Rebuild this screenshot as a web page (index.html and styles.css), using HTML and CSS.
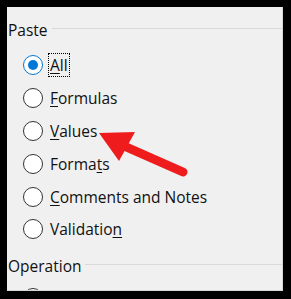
FILE: index.html
```html
<!DOCTYPE html>
<html lang="en">

<head>
  <meta charset="UTF-8">
  <meta name="viewport" content="width=device-width, initial-scale=1.0">
  <title>Paste Special</title>
  <link rel="stylesheet" href="styles.css">
</head>

<body>
  <div class="panel">
    <div class="group-title"><span>Paste</span><i class="rule"></i></div>
    <ul class="options">
      <li><span class="radio checked"></span><span class="label focus"><u>A</u>ll</span></li>
      <li><span class="radio"></span><span class="label"><u>F</u>ormulas</span></li>
      <li><span class="radio"></span><span class="label"><u>V</u>alues</span></li>
      <li><span class="radio"></span><span class="label">Forma<u>t</u>s</span></li>
      <li><span class="radio"></span><span class="label"><u>C</u>omments and Notes</span></li>
      <li><span class="radio"></span><span class="label">Validatio<u>n</u></span></li>
    </ul>
    <div class="group-title second"><span>Operation</span><i class="rule"></i></div>
    <ul class="options cut">
      <li><span class="radio"></span></li>
    </ul>
  </div>
  <!-- red pointer drawn on top of the dialog -->
  <svg class="arrow" width="291" height="299" viewBox="0 0 291 299">
    <line x1="124" y1="146" x2="183" y2="172" stroke="#ee1c1c" stroke-width="9" stroke-linecap="round" />
    <polygon points="99,133 135,132 119,161" fill="#ee1c1c" />
  </svg>
</body>

</html>
```

FILE: styles.css
```css
body {
  margin: 0;
  padding: 0;
  background: #000;
  width: 291px;
  height: 299px;
  position: relative;
  overflow: hidden;
  font-family: "Open Sans", "Liberation Sans", sans-serif;
  font-size: 15.5px;
  color: #111;
}

.panel {
  margin: 7px 0 0 7px;
  width: 276px;
  height: 284px;
  background: #f0f0f0;
  border-right: 1px solid #d6d6d6;
  border-bottom: 1px solid #d6d6d6;
  padding: 13px 0 0 1px;
  box-sizing: border-box;
  overflow: hidden;
}

.group-title {
  display: flex;
  align-items: center;
  height: 20px;
  line-height: 20px;
  gap: 4px;
}

.group-title.second {
  margin-top: 10px;
}

.rule {
  flex: 1;
  height: 1px;
  background: #d9d9d9;
  margin-top: -3px;
}

.options {
  list-style: none;
  margin: 9px 0 0 0;
  padding: 0 0 0 15px;
}

.options.cut {
  margin-top: 6px;
}

.options li {
  display: flex;
  align-items: center;
  height: 32.8px;
}

.radio {
  width: 20px;
  height: 20px;
  box-sizing: border-box;
  border: 1px solid #333;
  border-radius: 50%;
  background: #fff;
  display: flex;
  align-items: center;
  justify-content: center;
}

.radio.checked {
  border-color: #0078d7;
}

.radio.checked::after {
  content: "";
  width: 10px;
  height: 10px;
  border-radius: 50%;
  background: #0078d7;
}

.label {
  margin-left: 5px;
  padding: 0 1px;
  line-height: 22px;
  border: 1px dotted transparent;
}

.label.focus {
  border-color: #000;
}

.label u {
  text-decoration-thickness: 1px;
  text-underline-offset: 2px;
}

.arrow {
  position: absolute;
  top: 0;
  left: 0;
}
```
